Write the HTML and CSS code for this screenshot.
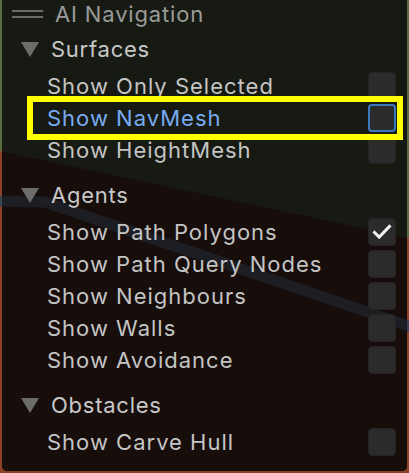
FILE: index.html
```html
<!DOCTYPE html>
<html lang="en">
<head>
  <meta charset="UTF-8" />
  <title>AI Navigation</title>
  <link rel="stylesheet" href="styles.css">
</head>
<body>

  <div class="scene">
    <svg class="backdrop" viewBox="0 0 409 473" width="409" height="473">
      <defs>
        <clipPath id="panel-clip">
          <rect x="2" y="-8" width="405" height="479" rx="5" />
        </clipPath>
      </defs>
      <rect width="409" height="473" fill="#5b6d3d" />
      <polygon points="0,151 409,238 409,473 0,473" fill="#8b4126" />
      <polyline points="0,201 45,202 420,330" fill="none" stroke="#3c4354" stroke-width="11" />
      <g clip-path="url(#panel-clip)">
        <rect width="409" height="473" fill="#171a13" />
        <polygon points="0,151 409,238 409,473 0,473" fill="#170e0b" />
        <polyline points="0,201 45,202 420,330" fill="none" stroke="#1c1e24" stroke-width="11" />
      </g>
    </svg>

    <div class="overlay">
      <div class="titlebar">
        <span class="grip"></span>
        <span class="title">AI Navigation</span>
      </div>

      <div class="group">
        <div class="group-head"><span class="caret"></span>Surfaces</div>
        <div class="toggle"><span class="label">Show Only Selected</span><span class="check"></span></div>
        <div class="toggle focused"><span class="label">Show NavMesh</span><span class="check"></span></div>
        <div class="toggle"><span class="label">Show HeightMesh</span><span class="check"></span></div>
      </div>

      <div class="group">
        <div class="group-head"><span class="caret"></span>Agents</div>
        <div class="toggle">
          <span class="label">Show Path Polygons</span>
          <span class="check on">
            <svg viewBox="0 0 28 28" width="28" height="28"><path d="M6 14.5 L11 19.5 L22 8" fill="none" stroke="#f2f2f2" stroke-width="3.2" stroke-linecap="square" /></svg>
          </span>
        </div>
        <div class="toggle"><span class="label">Show Path Query Nodes</span><span class="check"></span></div>
        <div class="toggle"><span class="label">Show Neighbours</span><span class="check"></span></div>
        <div class="toggle"><span class="label">Show Walls</span><span class="check"></span></div>
        <div class="toggle"><span class="label">Show Avoidance</span><span class="check"></span></div>
      </div>

      <div class="group">
        <div class="group-head"><span class="caret"></span>Obstacles</div>
        <div class="toggle"><span class="label">Show Carve Hull</span><span class="check"></span></div>
      </div>
    </div>

    <div class="annotation"></div>
  </div>

</body>
</html>
```

FILE: styles.css
```css
* {
  margin: 0;
  padding: 0;
  box-sizing: border-box;
}

body {
  background: #171a13;
  font-family: 'Inter', 'Noto Sans', sans-serif;
  overflow: hidden;
}

.scene {
  position: relative;
  width: 409px;
  height: 473px;
}

.backdrop {
  position: absolute;
  left: 0;
  top: 0;
  display: block;
}

.overlay {
  position: relative;
  padding-right: 13px;
}

/* === Title === */
.titlebar {
  display: flex;
  align-items: center;
  gap: 12px;
  height: 27px;
  padding-left: 12px;
  margin-bottom: 6px;
}

.grip {
  width: 31px;
  height: 8px;
  border-top: 2px solid #6b6b6b;
  border-bottom: 2px solid #6b6b6b;
  margin-top: 1px;
}

.title {
  font-size: 22px;
  color: #9a9a9a;
  letter-spacing: 0.85px;
}

/* === Groups === */
.group + .group {
  margin-top: 13px;
}

.group-head {
  display: flex;
  align-items: center;
  gap: 12px;
  height: 32px;
  padding-left: 21px;
  margin-bottom: 5px;
  font-size: 22px;
  color: #c8c8c8;
  letter-spacing: 0.75px;
}

.caret {
  width: 0;
  height: 0;
  border-left: 9px solid transparent;
  border-right: 9px solid transparent;
  border-top: 15px solid #6c6c6a;
  margin-top: 1px;
}

.toggle {
  display: flex;
  align-items: center;
  height: 32px;
  padding-left: 47px;
}

.label {
  font-size: 22px;
  color: #c4c4c4;
  letter-spacing: 1px;
}

.check {
  margin-left: auto;
  width: 28px;
  height: 28px;
  border-radius: 4px;
  background: #2b2b2b;
  border: 1px solid #232323;
  display: flex;
  align-items: center;
  justify-content: center;
}

.check svg {
  display: block;
}

.focused .label {
  color: #79aaf0;
}

.focused .check {
  border: 2px solid #3c78c0;
}

/* === Highlight annotation === */
.annotation {
  position: absolute;
  left: 27px;
  top: 96px;
  width: 376px;
  height: 44px;
  border: 6px solid #ffff00;
}
```
